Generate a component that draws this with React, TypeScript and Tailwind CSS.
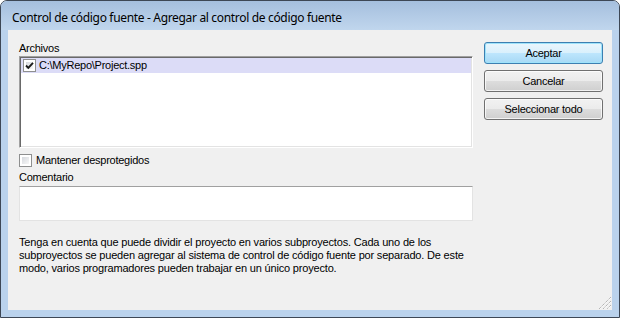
import React from 'react'

function CheckBox({ checked }: { checked?: boolean }) {
  return (
    <span className="relative inline-block w-[13px] h-[13px] shrink-0 border border-[#8e8f8f] bg-white">
      <span className="absolute inset-[2px] bg-gradient-to-br from-[#d6d9de] to-[#f7f7f7]" />
      {checked && (
        <svg className="absolute left-0 top-0" width="11" height="11" viewBox="0 0 11 11">
          <path d="M2 5.5 L4.3 7.8 L9 2.8" fill="none" stroke="#1a1a1a" strokeWidth="1.9" />
        </svg>
      )}
    </span>
  )
}

function WinButton({ label, isDefault }: { label: string; isDefault?: boolean }) {
  return (
    <button
      className={`w-[119px] h-[22px] rounded-[3px] border text-[11px] tracking-[-0.25px] text-black leading-none ${
        isDefault
          ? 'border-[#3c7fb1] bg-[linear-gradient(to_bottom,#eaf6fd_0%,#d9f0fc_50%,#bee6fd_50%,#a7d9f5_100%)] shadow-[inset_0_0_0_1px_#9ee3fb]'
          : 'border-[#707070] bg-[linear-gradient(to_bottom,#f2f2f2_0%,#ebebeb_50%,#dddddd_50%,#cfcfcf_100%)] shadow-[inset_0_0_0_1px_rgba(255,255,255,0.75)]'
      }`}
    >
      {label}
    </button>
  )
}

export default function App() {
  return (
    <div className="w-[620px] h-[318px] bg-white overflow-hidden">
      <div className="w-[620px] h-[318px] flex flex-col rounded-t-[7px] border border-[#3d4755] bg-[#bad2ec] shadow-[inset_0_1px_0_#e8f0f9] font-['Liberation_Sans',Arial,sans-serif]">
        {/* Title bar */}
        <div className="h-[29px] shrink-0 rounded-t-[6px] bg-gradient-to-b from-[#a5bfde] to-[#c0d6ed] pl-[11px] pt-[9px]">
          <div className="font-['Noto_Sans',sans-serif] text-[12px] leading-[16px] text-black tracking-[-0.33px]">
            Control de código fuente - Agregar al control de código fuente
          </div>
        </div>

        {/* Client area */}
        <div className="relative mx-[7px] mb-[7px] flex-1 flex bg-[#f0f0f0] text-[11px] tracking-[-0.25px] text-black">
          <div className="ml-[11px] w-[454px] pt-[10px] flex flex-col">
            <div className="h-[16px] leading-[16px]">Archivos</div>
            <div className="h-[92px] border border-t-[#a0a0a0] border-l-[#a0a0a0] border-r-[#ffffff] border-b-[#ffffff] bg-white shadow-[inset_1px_1px_0_#696969,inset_-1px_-1px_0_#e3e3e3] p-[1px]">
              <div className="h-[15px] flex items-center bg-[#dcdcf7] pl-[2px]">
                <CheckBox checked />
                <span className="ml-[3px] leading-[15px]">C:\MyRepo\Project.spp</span>
              </div>
            </div>
            <div className="mt-[6px] h-[13px] flex items-center">
              <CheckBox />
              <span className="ml-[4px] leading-[13px]">Mantener desprotegidos</span>
            </div>
            <div className="mt-[2px] h-[16px] leading-[16px]">Comentario</div>
            <div className="mt-[1px] h-[35px] border border-t-[#a0a0a0] border-l-[#e3e3e3] border-r-[#e3e3e3] border-b-[#e3e3e3] bg-white" />
            <p className="mt-[15px] leading-[13px] w-[470px] tracking-[-0.18px]">
              Tenga en cuenta que puede dividir el proyecto en varios subproyectos. Cada uno de los
              <br />
              subproyectos se pueden agregar al sistema de control de código fuente por separado. De este
              <br />
              modo, varios programadores pueden trabajar en un único proyecto.
            </p>
          </div>

          <div className="ml-[11px] pt-[12px] flex flex-col gap-[6px]">
            <WinButton label="Aceptar" isDefault />
            <WinButton label="Cancelar" />
            <WinButton label="Seleccionar todo" />
          </div>

          {/* Size grip */}
          <svg className="absolute right-[1px] bottom-[1px]" width="12" height="12" viewBox="0 0 12 12">
            {[0, 4, 8].map((o) => (
              <g key={o}>
                <line x1={12} y1={o} x2={o} y2={12} stroke="#9a9a9a" strokeWidth="1" strokeDasharray="1 1" />
                <line x1={12} y1={o + 1} x2={o + 1} y2={12} stroke="#ffffff" strokeWidth="1" strokeDasharray="1 1" />
              </g>
            ))}
          </svg>
        </div>
      </div>
    </div>
  )
}
